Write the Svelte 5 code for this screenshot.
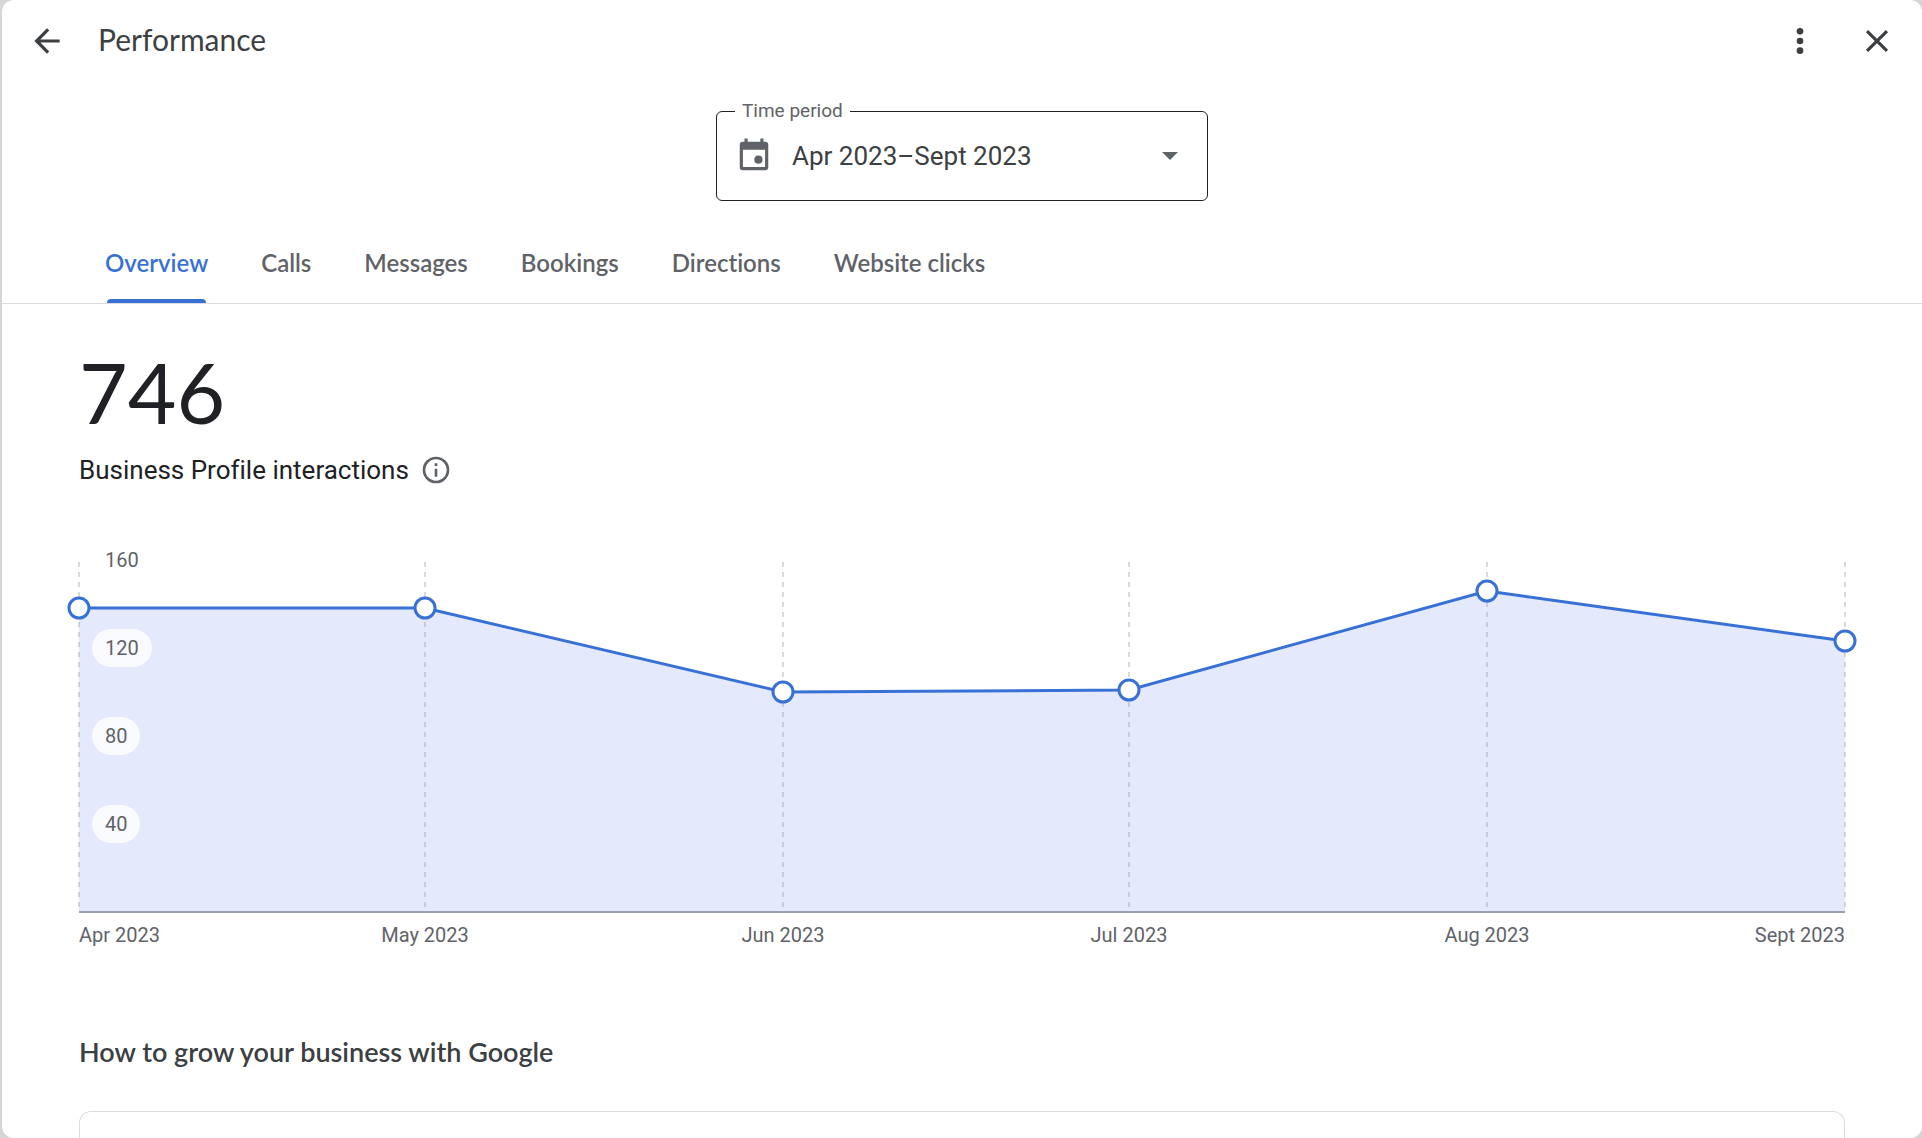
<script lang="ts">
  const tabs = [
    "Overview",
    "Calls",
    "Messages",
    "Bookings",
    "Directions",
    "Website clicks",
  ];

  const points = [
    { label: "Apr 2023", day: 0, value: 138 },
    { label: "May 2023", day: 30, value: 138 },
    { label: "Jun 2023", day: 61, value: 100 },
    { label: "Jul 2023", day: 91, value: 101 },
    { label: "Aug 2023", day: 122, value: 146 },
    { label: "Sept 2023", day: 153, value: 123 },
  ];

  const ticks = [160, 120, 80, 40];
  const maxValue = 160;
  const totalDays = 153;
  const plotHeight = 352;

  let activeTab = $state("Overview");
  let period = $state("Apr 2023–Sept 2023");
  let plotWidth = $state(0);

  const x = (day: number) => Math.round((day / totalDays) * plotWidth);
  const y = (value: number) =>
    Math.round(plotHeight - (value / maxValue) * plotHeight);

  const line = $derived(
    points.map((p) => `${x(p.day)},${y(p.value)}`).join(" "),
  );
  const area = $derived(
    `0,${plotHeight} ${line} ${plotWidth},${plotHeight}`,
  );

  const anchor = (i: number) => {
    if (i === 0) return "start";
    return i === points.length - 1 ? "end" : "middle";
  };
</script>

<div class="dialog">
  <header>
    <button class="icon-button" type="button" aria-label="Back">
      <svg viewBox="0 0 24 24">
        <path d="M20 11H7.83l5.59-5.59L12 4l-8 8 8 8 1.41-1.41L7.83 13H20z" />
      </svg>
    </button>
    <h1>Performance</h1>
    <button class="icon-button" type="button" aria-label="More options">
      <svg viewBox="0 0 24 24">
        <circle cx="12" cy="5.9" r="2.1" />
        <circle cx="12" cy="12" r="2.1" />
        <circle cx="12" cy="18.1" r="2.1" />
      </svg>
    </button>
    <button class="icon-button" type="button" aria-label="Close">
      <svg viewBox="0 0 24 24">
        <path
          d="M19 6.41 17.59 5 12 10.59 6.41 5 5 6.41 10.59 12 5 17.59 6.41 19 12 13.41 17.59 19 19 17.59 13.41 12z"
        />
      </svg>
    </button>
  </header>

  <div class="period">
    <label for="period">Time period</label>
    <svg class="calendar" viewBox="0 0 24 24" aria-hidden="true">
      <path
        d="M19 3h-1V1h-2v2H8V1H6v2H5a2 2 0 0 0-2 2v14a2 2 0 0 0 2 2h14a2 2 0 0 0 2-2V5a2 2 0 0 0-2-2Zm0 16H5V8h14Z"
      />
      <circle cx="14.8" cy="14.3" r="2.6" />
    </svg>
    <select id="period" bind:value={period}>
      <option>Apr 2023–Sept 2023</option>
    </select>
    <svg class="caret" viewBox="0 0 16 8" aria-hidden="true">
      <path d="M0 0h16L8 8z" />
    </svg>
  </div>

  <div class="tabs" role="tablist">
    {#each tabs as tab}
      <button
        class="tab"
        class:active={tab === activeTab}
        type="button"
        role="tab"
        aria-selected={tab === activeTab}
        onclick={() => (activeTab = tab)}
      >
        {tab}
      </button>
    {/each}
  </div>

  <main>
    <div class="total">746</div>
    <div class="metric">
      <span>Business Profile interactions</span>
      <button class="info" type="button" aria-label="About this metric">
        <svg viewBox="0 0 24 24">
          <path
            d="M11 7h2v2h-2zm0 4h2v6h-2zm1-9a10 10 0 1 0 0 20 10 10 0 0 0 0-20Zm0 18a8 8 0 1 1 0-16 8 8 0 0 1 0 16Z"
          />
        </svg>
      </button>
    </div>

    <div class="chart" bind:clientWidth={plotWidth}>
      <svg width={plotWidth} height="392">
        <polygon class="area" points={area} />
        {#each points as p}
          <line class="grid" x1={x(p.day)} x2={x(p.day)} y1="2" y2={plotHeight} />
        {/each}
        <line class="axis" x1="0" x2={plotWidth} y1={plotHeight} y2={plotHeight} />
        <polyline class="line" points={line} />
        {#each points as p, i}
          <circle class="dot" cx={x(p.day)} cy={y(p.value)} r="10" />
          <text x={x(p.day)} y="382" text-anchor={anchor(i)}>{p.label}</text>
        {/each}
      </svg>
      <div class="ticks">
        {#each ticks as tick}
          <span>{tick}</span>
        {/each}
      </div>
    </div>

    <h2>How to grow your business with Google</h2>
    <section class="card"></section>
  </main>
</div>

<style>
  :global(body) {
    margin: 0;
    background: #d6d6d6;
  }

  .dialog {
    box-sizing: border-box;
    display: flex;
    flex-direction: column;
    height: 100vh;
    margin-left: 2px;
    overflow: hidden;
    border-radius: 12px;
    background: #fff;
    color: #3c4043;
    font-family: Roboto, sans-serif;
    font-variant-ligatures: none;
  }

  button {
    padding: 0;
    border: none;
    background: none;
    color: inherit;
    cursor: pointer;
  }

  svg {
    display: block;
    fill: currentColor;
  }

  header {
    display: flex;
    align-items: center;
    height: 81px;
    padding: 0 26px;
  }

  .icon-button svg {
    width: 38px;
    height: 38px;
  }

  .icon-button + .icon-button {
    margin-left: 39px;
  }

  h1 {
    flex: 1;
    margin: 0 0 0 32px;
    padding-bottom: 3px;
    font-family: Lato, sans-serif;
    font-size: 30px;
    font-weight: 400;
    line-height: 40px;
  }

  .period {
    position: relative;
    box-sizing: border-box;
    display: flex;
    flex: none;
    align-items: center;
    align-self: center;
    width: 492px;
    height: 90px;
    margin-top: 30px;
    border: 1px solid #202124;
    border-radius: 6px;
  }

  .period label {
    position: absolute;
    top: -12px;
    left: 18px;
    padding: 0 7px;
    background: #fff;
    color: #5f6368;
    font-size: 19px;
    line-height: 22px;
  }

  .calendar {
    position: absolute;
    left: 18px;
    width: 38px;
    height: 38px;
    color: #5f6368;
    pointer-events: none;
  }

  select {
    width: 100%;
    height: 100%;
    padding: 0 60px 0 75px;
    border: none;
    border-radius: 6px;
    appearance: none;
    background: none;
    color: #3c4043;
    font-family: Roboto, sans-serif;
    font-size: 26px;
    line-height: 32px;
  }

  .caret {
    position: absolute;
    right: 29px;
    width: 16px;
    height: 8px;
    color: #5f6368;
    pointer-events: none;
  }

  .tabs {
    display: flex;
    flex: none;
    gap: 1px;
    height: 78px;
    margin-top: 24px;
    padding-left: 77px;
    border-bottom: 1px solid #dadce0;
  }

  .tab {
    position: relative;
    padding: 0 26px 2px;
    color: #5f6368;
    font-family: Lato, sans-serif;
    font-size: 24px;
    font-weight: 600;
    line-height: 32px;
    font-variant-ligatures: none;
  }

  .tab.active {
    color: #3871d6;
  }

  .tab.active::after {
    content: "";
    position: absolute;
    right: 28px;
    bottom: 0;
    left: 28px;
    height: 4px;
    border-radius: 4px 4px 0 0;
    background: #3871d6;
  }

  main {
    display: flex;
    flex: 1;
    flex-direction: column;
    padding: 38px 77px 0;
  }

  .total {
    color: #202124;
    font-family: Lato, sans-serif;
    font-size: 84px;
    line-height: 100px;
  }

  .metric {
    display: flex;
    align-items: center;
    gap: 11px;
    margin-top: 12px;
    color: #202124;
    font-size: 26px;
    line-height: 32px;
  }

  .info {
    color: #5f6368;
  }

  .info svg {
    width: 32px;
    height: 32px;
  }

  .chart {
    position: relative;
    margin-top: 74px;
  }

  .chart svg {
    overflow: visible;
  }

  .area {
    fill: #e4eafb;
  }

  .grid {
    stroke: #9aa0a6;
    stroke-opacity: 0.4;
    stroke-width: 2;
    stroke-dasharray: 5 5;
  }

  .axis {
    stroke: #9aa0ac;
    stroke-width: 2;
  }

  .line {
    fill: none;
    stroke: #3871d6;
    stroke-width: 3;
  }

  .dot {
    fill: #fff;
    stroke: #3871d6;
    stroke-width: 3;
  }

  .chart text {
    fill: #5f6368;
    font-size: 20px;
  }

  .ticks {
    position: absolute;
    top: -19px;
    left: 13px;
    display: flex;
    flex-direction: column;
    align-items: flex-start;
    gap: 50px;
  }

  .ticks span {
    padding: 0 13px;
    border-radius: 19px;
    background: rgba(255, 255, 255, 0.8);
    color: #5f6368;
    font-size: 20px;
    line-height: 38px;
  }

  h2 {
    margin: 80px 0 0;
    font-family: Lato, sans-serif;
    font-size: 27px;
    font-weight: 600;
    line-height: 40px;
  }

  .card {
    flex: 1;
    margin-top: 39px;
    border: 1px solid #dadce0;
    border-bottom: none;
    border-radius: 12px 12px 0 0;
  }
</style>
